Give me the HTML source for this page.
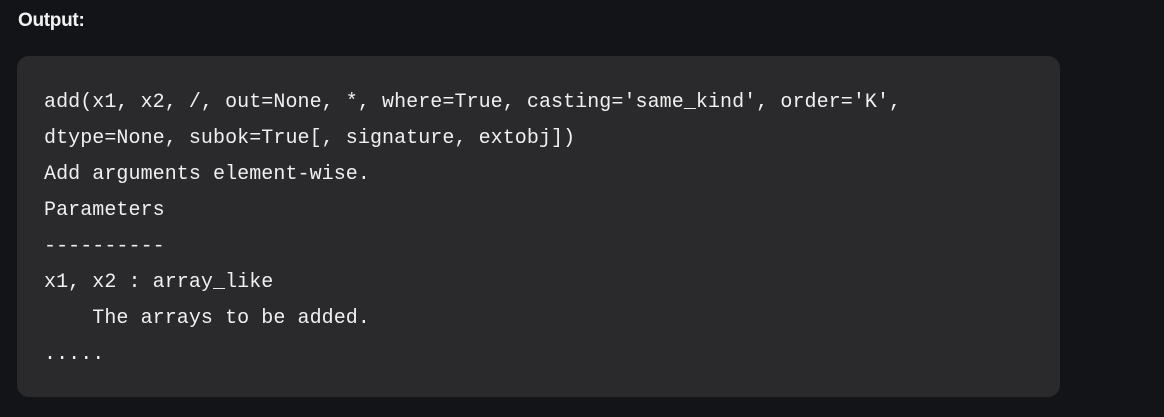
<!DOCTYPE html>
<html><head><style>
html,body{margin:0;padding:0;background:#131418;width:1164px;height:417px;overflow:hidden}
.h{position:absolute;left:18px;top:10px;font:bold 19px "Liberation Sans",sans-serif;color:#f2f2f2;letter-spacing:-0.3px}
.box{position:absolute;left:17px;top:56px;width:1043px;height:341px;background:#2a2a2d;border-radius:12px}
pre{position:absolute;left:44px;top:85px;margin:0;font:20px/36px "Liberation Mono",monospace;color:#f0f0f0;letter-spacing:0.07px}
</style></head><body>
<div class="h">Output:</div>
<div class="box"></div>
<pre>add(x1, x2, /, out=None, *, where=True, casting='same_kind', order='K',
dtype=None, subok=True[, signature, extobj])
Add arguments element-wise.
Parameters
----------
x1, x2 : array_like
    The arrays to be added.
.....</pre>
</body></html>
